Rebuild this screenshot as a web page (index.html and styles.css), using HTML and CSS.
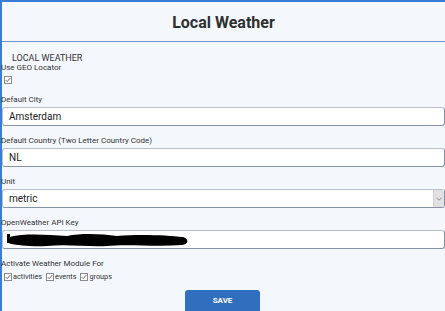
FILE: index.html
```html
<!DOCTYPE html>
<html>
<head>
<meta charset="utf-8">
<link rel="stylesheet" href="styles.css">
</head>
<body>
<div class="panel">
  <div class="header"><h1 class="title">Local Weather</h1></div>
  <div class="content">
    <div class="section-title">LOCAL WEATHER</div>
    <div class="small-label">Use GEO Locator</div>
    <div class="geo-row">
      <svg class="cb" width="8" height="8" viewBox="0 0 8 8"><rect x="0.5" y="0.5" width="7" height="7" fill="#fff" stroke="#8a8a8a"/><path d="M1.8 4.2 L3.2 5.6 L6.2 2.2" fill="none" stroke="#555" stroke-width="0.9"/></svg>
    </div>

    <div class="group">
      <div class="label">Default City</div>
      <div class="field">Amsterdam</div>
    </div>
    <div class="group">
      <div class="label">Default Country (Two Letter Country Code)</div>
      <div class="field">NL</div>
    </div>
    <div class="group">
      <div class="label">Unit</div>
      <div class="field select">metric<span class="arrow"><svg width="6" height="4" viewBox="0 0 6 4"><path d="M0.5 0.8 L3 3.2 L5.5 0.8" fill="none" stroke="#888" stroke-width="0.9"/></svg></span></div>
    </div>
    <div class="group">
      <div class="label">OpenWeather API Key</div>
      <div class="field key">
        <svg class="redact" width="182" height="16" viewBox="0 0 182 16"><path d="M2 5 C20 1 40 3 60 4 C75 1 95 2 110 4 C130 2 160 3 176 5 C182 7 182 12 175 13 C150 15 120 12 100 14 C80 15 60 12 40 14 C25 15 10 13 4 12 C-1 10 -1 7 2 5 Z" fill="#000"/><rect x="0" y="2" width="3" height="9" fill="#000"/></svg>
      </div>
    </div>

    <div class="label act">Activate Weather Module For</div>
    <div class="checks">
      <span class="chk"><svg class="cb" width="8" height="8" viewBox="0 0 8 8"><rect x="0.5" y="0.5" width="7" height="7" fill="#fff" stroke="#8a8a8a"/><path d="M1.8 4.2 L3.2 5.6 L6.2 2.2" fill="none" stroke="#555" stroke-width="0.9"/></svg>activities</span>
      <span class="chk"><svg class="cb" width="8" height="8" viewBox="0 0 8 8"><rect x="0.5" y="0.5" width="7" height="7" fill="#fff" stroke="#8a8a8a"/><path d="M1.8 4.2 L3.2 5.6 L6.2 2.2" fill="none" stroke="#555" stroke-width="0.9"/></svg>events</span>
      <span class="chk"><svg class="cb" width="8" height="8" viewBox="0 0 8 8"><rect x="0.5" y="0.5" width="7" height="7" fill="#fff" stroke="#8a8a8a"/><path d="M1.8 4.2 L3.2 5.6 L6.2 2.2" fill="none" stroke="#555" stroke-width="0.9"/></svg>groups</span>
    </div>
    <div class="actions"><button class="save">SAVE</button></div>
  </div>
</div>
</body>
</html>
```
FILE: styles.css
```css
html, body {
  margin: 0;
  padding: 0;
  background: #f4f8fd;
  overflow: hidden;
}
body {
  font-family: Roboto, "Liberation Sans", sans-serif;
  color: #333;
}
.panel {
  width: 443px;
  height: 309px;
  border-top: 2px solid #3b7dd6;
  border-left: 2px solid #3b7dd6;
  background: #f4f8fd;
}
.header {
  height: 39px;
  border-bottom: 1px solid #6d93c9;
  display: flex;
  align-items: center;
  justify-content: center;
}
.title {
  margin: 0;
  font-size: 16px;
  font-weight: 700;
  color: #2f2f2f;
  padding-top: 2px;
}
.content {
  padding: 0;
}
.section-title {
  margin-top: 10px;
  margin-left: 10px;
  font-size: 9px;
  line-height: 12px;
  color: #333;
}
.small-label, .label {
  font-size: 8px;
  line-height: 10px;
  color: #333;
  margin-left: -1px;
}
.small-label {
  margin-top: -1px;
}
.geo-row {
  height: 22px;
  padding-top: 3px;
  padding-left: 2px;
  box-sizing: border-box;
}
.cb {
  display: block;
}
.group {
  margin-bottom: 10px;
}
.label {
  margin-bottom: 2px;
}
.field {
  height: 19px;
  box-sizing: border-box;
  background: #fff;
  border: 1px solid #b7c0cc;
  border-right-color: #8593a5;
  border-bottom-color: #8593a5;
  border-radius: 3px;
  font-size: 10px;
  color: #222;
  padding-left: 6px;
  display: flex;
  align-items: center;
  position: relative;
}
.select .arrow {
  position: absolute;
  right: 0;
  top: 0;
  bottom: 0;
  width: 10px;
  background: #e1e1e1;
  border-left: 1px solid #cfcfcf;
  display: flex;
  align-items: center;
  justify-content: center;
}
.key {
  padding-left: 4px;
}
.redact {
  display: block;
}
.act {
  margin-top: 1px;
  margin-bottom: 3px;
}
.checks {
  display: flex;
  align-items: center;
  gap: 4px;
  padding-left: 2px;
  font-size: 7.3px;
  line-height: 10px;
}
.chk {
  display: flex;
  align-items: center;
  gap: 1px;
}
.actions {
  display: flex;
  justify-content: center;
  margin-top: 8px;
  padding-right: 4px;
}
.save {
  width: 75px;
  height: 24px;
  border: none;
  border-radius: 3px;
  background: #2f6fbd;
  color: #fff;
  font-family: Roboto, "Liberation Sans", sans-serif;
  font-weight: 700;
  font-size: 8px;
  padding: 0 0 4px;
  margin-left: 2px;
}
```
